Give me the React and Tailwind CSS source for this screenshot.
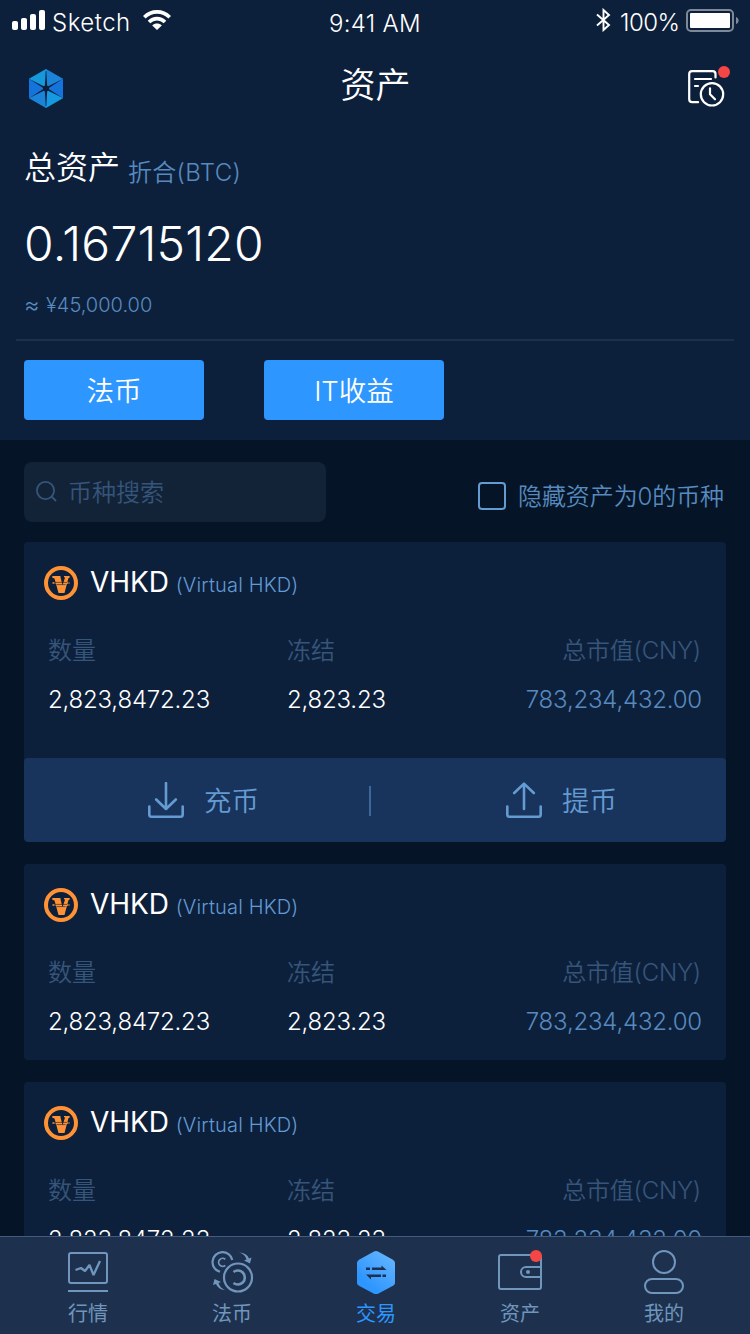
import React from "react";

const FONT = "font-['Inter','Noto_Sans_CJK_SC',sans-serif]";

function StatusBar() {
  return (
    <div className="flex h-11 items-start text-2xl leading-6 text-white">
      <div className="flex w-[250px] items-start pl-3">
        <svg className="mt-[10px] h-5 w-[33px]" viewBox="0 0 33 20" fill="#fff">
          <rect x="0" y="11" width="6" height="9" rx="2" />
          <rect x="9" y="8" width="6" height="12" rx="2" />
          <rect x="18" y="4" width="6" height="16" rx="2" />
          <rect x="27" y="0" width="6" height="20" rx="2" />
        </svg>
        <span className="ml-[7px] mt-[11px] w-[78px] whitespace-nowrap font-[350] tracking-[0.5px]">Sketch</span>
        <svg className="ml-[13px] mt-[10px] h-5 w-7" viewBox="0 0 28 20" fill="none" stroke="#fff" strokeWidth="3.7">
          <path d="M1.3 7.2C8.5.1 19.5.1 26.7 7.2" />
          <path d="M6 12c4.600-4.400 11.400-4.400 16 0" />
          <path d="M14 20 9.200 15.500c2.800-2.600 6.800-2.600 9.600 0z" fill="#fff" stroke="none" />
        </svg>
      </div>
      <div className="mt-[12px] w-[250px] text-center font-[350] tracking-[0.3px]">9:41 AM</div>
      <div className="flex w-[250px] items-start justify-end pr-[11px]">
        <svg className="mt-[8px] h-6 w-[15px]" viewBox="0 0 15 24" fill="none" stroke="#fff" strokeWidth="1.9">
          <path d="M1 6.500 13 17 7.500 22V2L13 7 1 17.500" />
        </svg>
        <span className="ml-[9px] mt-[11px] w-[61px] whitespace-nowrap font-[350] tracking-[-0.5px]">100%</span>
        <svg className="ml-[5px] mt-[9px] h-[23px] w-[53px]" viewBox="0 0 53 23">
          <rect x="1" y="1" width="46" height="21" rx="4" fill="none" stroke="#7d8899" strokeWidth="2" />
          <rect x="4" y="4" width="40" height="15" rx="1" fill="#fff" />
          <path d="M50 8c3.500 1 3.500 6 0 7z" fill="#7d8899" />
        </svg>
      </div>
    </div>
  );
}

function Logo() {
  return (
    <svg className="mt-[25px] h-[39px] w-[34px]" viewBox="0 0 34 39">
      <path d="M17 0v19.500L0 9.700z" fill="#1599dc" />
      <path d="M17 0l17 9.700-17 9.800z" fill="#1b84d8" />
      <path d="M34 9.700v19.600L17 19.500z" fill="#1573dc" />
      <path d="M34 29.300 17 39V19.500z" fill="#1599e0" />
      <path d="M17 39 0 29.300l17-9.800z" fill="#1b84d8" />
      <path d="M0 9.700v19.600l17-9.800z" fill="#1573dc" />
      <g fill="#0d203b">
        <path d="M16.700 2h.6l1 17.500-1 17.500h-.6l-1-17.500z" />
        <path d="M2 10.900 17.500 18.600 32 28.100 16.500 20.400z" />
        <path d="M32 10.900 16.500 18.600 2 28.100 17.500 20.400z" />
        <circle cx="17" cy="19.500" r="3" />
      </g>
    </svg>
  );
}

function NavBar() {
  return (
    <div className="flex h-[90px] items-start justify-between pl-[29px] pr-[19px] text-white">
      <Logo />
      <h1 className="mt-[21px] text-[35px] font-[350] leading-10">资产</h1>
      <svg className="mt-[21px] h-[42px] w-[43px]" viewBox="0 0 43 42" fill="none" stroke="#fff" strokeWidth="2.200" strokeLinecap="round">
        <path d="M27.500 12.500V9q0-2.900-2.900-2.900H4.100Q1.200 6.100 1.200 9v25q0 3.200 2.900 3.200h6M7 14h16M7 21h3" />
        <circle cx="24" cy="29.300" r="11.200" fill="#0d203b" />
        <path d="M22 23.300v6l5 5" strokeLinejoin="round" />
        <circle cx="36" cy="7" r="6" fill="#f64545" stroke="none" />
      </svg>
    </div>
  );
}

function Summary() {
  return (
    <section>
      <div className="flex h-[66px] items-start pl-6 pt-[14px]">
        <span className="text-[32px] font-[350] leading-10 text-white">总资产</span>
        <span className="ml-2 mt-[5px] text-2xl font-[350] leading-10 tracking-[0.3px] text-[#578abf]">折合(BTC)</span>
      </div>
      <div className="h-20 pl-6 pt-[14px] text-[48px] font-[350] leading-[60px] tracking-[0.2px] text-white">0.16715120</div>
      <div className="flex h-[59px] items-start gap-[7px] pl-6 pt-[10px] text-xl font-[350] leading-[30px] text-[#578abf]">
        <span className="w-[15px] text-[24px]">≈</span>
        <span>¥45,000.00</span>
      </div>
      <div className="mx-4 h-0.5 bg-[#1c304d]" />
      <div className="flex gap-[60px] px-6 pt-[19px] pb-5 text-[27.5px] font-[350] text-white">
        <button className="h-[60px] w-[180px] rounded bg-[#2e96ff] pt-[3px] leading-[57px]">法币</button>
        <button className="h-[60px] w-[180px] rounded bg-[#2e96ff] pt-[3px] leading-[57px]">IT收益</button>
      </div>
    </section>
  );
}

function Filters() {
  return (
    <div className="flex h-[102px] shrink-0 items-start justify-between pl-6 pr-[26px] pt-[22px] text-2xl font-[350]">
      <div className="flex h-[60px] w-[302px] items-center rounded-lg bg-[#122338] pl-3 text-[#36557a]">
        <svg className="h-[22px] w-[22px]" viewBox="0 0 22 22" fill="none" stroke="#36557a" strokeWidth="1.800">
          <circle cx="9.500" cy="9.500" r="8.600" />
          <path d="M15.500 15.500 20 20" />
        </svg>
        <span className="ml-[10px] pt-px">币种搜索</span>
      </div>
      <label className="mt-5 flex h-7 items-center text-[#578abf]">
        <span className="h-7 w-7 rounded-[4px] border-2 border-[#649bd2]" />
        <span className="ml-3 whitespace-nowrap pt-px tracking-[-0.1px]">隐藏资产为0的币种</span>
      </label>
    </div>
  );
}

function CoinIcon() {
  return (
    <svg className="h-[34px] w-[34px]" viewBox="0 0 34 34">
      <circle cx="17" cy="17" r="15" fill="none" stroke="#ff9234" strokeWidth="4" />
      <path d="M8.300 10h8.200v1.200l2 8 2.500-7.500-1-.7v-1h5.700v1.500l-1.300.7L20.500 27h-6l-4-14.500-2.200-.8z" fill="#ff9234" />
      <path d="M8.500 17h3M22.500 17h3" stroke="#ff9234" strokeWidth="1.500" strokeDasharray="1.500 .5" />
      <path d="M11 16.400h12M12.500 18.600h9" stroke="#0d203b" strokeWidth=".6" />
    </svg>
  );
}

function DepositIcon({ up = false }) {
  return (
    <svg className="h-9 w-9" viewBox="0 0 36 36" fill="none" stroke="#649bd2" strokeWidth="2.600" strokeLinecap="round" strokeLinejoin="round">
      <path d="M1.300 24.500v8q0 2.200 2.200 2.200h29q2.200 0 2.200-2.200v-8" />
      {up ? <path d="M18 27V2M8.200 11 18 1.600 27.800 11" /> : <path d="M18 1v25M8.200 17.500 18 27l9.800-9.500" />}
    </svg>
  );
}

function CoinCard({ expanded = false }) {
  return (
    <article className="shrink-0 overflow-hidden rounded bg-[#0d203b]">
      <div className={expanded ? "h-[216px] pt-[23px]" : "h-[196px] pt-[23px]"}>
        <div className="flex h-[36px] items-center pl-5">
          <CoinIcon />
          <span className="ml-3 -mt-0.5 text-[28px] leading-9 tracking-[-0.1px] text-white">VHKD</span>
          <span className="ml-[7px] mt-[3px] text-xl font-light leading-9 tracking-[0.15px] text-[#629ad4]">(Virtual HKD)</span>
        </div>
        <div className="mt-[32px] grid grid-cols-[239px_200px_1fr] pl-6 pr-[25px] text-2xl font-[350] leading-9 text-[#36557a]">
          <span>数量</span>
          <span>冻结</span>
          <span className="text-right tracking-[-0.2px]">总市值(CNY)</span>
        </div>
        <div className="mt-[13px] grid grid-cols-[239px_200px_1fr] pl-6 pr-6 text-2xl font-[350] leading-9 tracking-[-0.2px] text-white">
          <span>2,823,8472.23</span>
          <span>2,823.23</span>
          <span className="text-right text-[#578abf]">783,234,432.00</span>
        </div>
      </div>
      {expanded && (
        <div className="flex h-[84px] items-center rounded bg-[#18345c] text-[27.5px] font-[350] text-[#649bd2]">
          <button className="flex w-[345px] items-center gap-[20px] pl-[124px]">
            <DepositIcon />
            <span className="pt-[3px]">充币</span>
          </button>
          <span className="mt-0.5 h-[30px] w-0.5 bg-[#3c689a]" />
          <button className="flex items-center gap-[20px] pl-[135px]">
            <DepositIcon up />
            <span className="pt-[3px]">提币</span>
          </button>
        </div>
      )}
    </article>
  );
}

const ICON = "h-12 w-12";

function MarketIcon() {
  return (
    <svg className={ICON} viewBox="0 0 48 48" fill="none" stroke="#7096bd" strokeWidth="2">
      <rect x="5" y="7" width="38" height="30" rx="2" />
      <path d="M4 45h40" />
      <path d="M11.500 24l5.500-2 4 3 4.500-6 4 10L36 15" strokeWidth="2.300" strokeLinejoin="bevel" />
    </svg>
  );
}

function FiatIcon() {
  return (
    <svg className={ICON} viewBox="0 0 48 48" fill="none" stroke="#7096bd" strokeWidth="2.200">
      <path d="M12 25.800A10 10 0 1 1 24.300 14" />
      <path d="M17.300 13.300a4 4 0 1 0 0 6" strokeWidth="1.800" />
      <circle cx="30" cy="31.500" r="14" />
      <path d="M25.500 26a7 7 0 1 1 0 11" strokeWidth="2.600" />
      <path d="M31 6.500q8 .5 10 6l2.500-1-1.500 6-6-3 2.500-1Q37 8 31 6.500zM17 44q-7-.5-9-6l-3 1L6.500 33l6.500 3-2.500 1Q12 42 17 44z" fill="#7096bd" stroke="none" />
    </svg>
  );
}

function TradeIcon() {
  return (
    <svg className={ICON} viewBox="0 0 48 48">
      <defs>
        <linearGradient id="trade" x1=".85" y1=".1" x2=".3" y2=".8">
          <stop stopColor="#61b3ff" />
          <stop offset="1" stopColor="#2e96ff" />
        </linearGradient>
      </defs>
      <path d="M22 5.500q2-1 4 0l15 8.300q2 1.200 2 3.200v20q0 1.500-2 2.700l-15 8q-2 1.100-4 0l-15-8q-2-1.200-2-2.700V17q0-2 2-3.200z" fill="url(#trade)" />
      <g fill="#1d314e">
        <path d="M14 21.500h4V24h-4zM20 21.500h9.500v-2l5 4.500H20zM14 28.500h15V31H19v2.500zM30.500 28.500h3.500V31h-3.500z" />
      </g>
    </svg>
  );
}

function WalletIcon() {
  return (
    <svg className={ICON} viewBox="0 0 48 48" fill="none" stroke="#7096bd" strokeWidth="2">
      <rect x="3" y="9" width="42" height="34" rx="2" />
      <path d="M45 21H30a5 5 0 0 0 0 10h15" />
      <circle cx="32" cy="26" r="2" fill="#7096bd" stroke="none" />
      <circle cx="40" cy="10" r="6" fill="#f64545" stroke="none" />
    </svg>
  );
}

function ProfileIcon() {
  return (
    <svg className={ICON} viewBox="0 0 48 48" fill="none" stroke="#7096bd" strokeWidth="2">
      <circle cx="24" cy="16" r="11" />
      <rect x="5" y="33" width="38" height="14" rx="7" />
    </svg>
  );
}

const TABS = [
  { label: "行情", Icon: MarketIcon },
  { label: "法币", Icon: FiatIcon },
  { label: "交易", Icon: TradeIcon, active: true },
  { label: "资产", Icon: WalletIcon },
  { label: "我的", Icon: ProfileIcon },
];

function TabBar() {
  return (
    <nav className="flex h-[98px] shrink-0 border-t border-[#455b7c] bg-[#1d314e] pl-4">
      {TABS.map(({ label, Icon, active }) => (
        <div key={label} className="flex w-36 flex-col items-center pt-[9px]">
          <Icon />
          <span className={active ? "mt-1.5 text-xl leading-7 text-[#2e96ff]" : "mt-1.5 text-xl leading-7 text-[#7096bd]"}>{label}</span>
        </div>
      ))}
    </nav>
  );
}

export default function App() {
  return (
    <div className={`flex h-[1334px] w-[750px] flex-col overflow-hidden bg-[#051527] ${FONT}`}>
      <header className="h-[440px] shrink-0 bg-[#0d203b]">
        <StatusBar />
        <NavBar />
        <Summary />
      </header>
      <main className="flex min-h-0 flex-1 flex-col overflow-hidden">
        <Filters />
        <div className="flex flex-col gap-[22px] px-6">
          <CoinCard expanded />
          <CoinCard />
          <CoinCard />
        </div>
      </main>
      <TabBar />
    </div>
  );
}
